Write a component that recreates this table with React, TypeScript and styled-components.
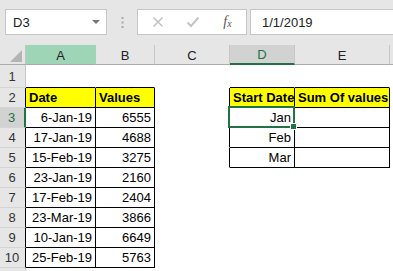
import React from 'react';
import styled, { createGlobalStyle } from 'styled-components';

const GREEN = '#217346';

const GlobalStyle = createGlobalStyle`
  html, body {
    margin: 0;
    padding: 0;
    background: #fff;
  }
  body {
    font-family: "Liberation Sans", Arial, sans-serif;
    width: 393px;
    height: 271px;
    overflow: hidden;
  }
`;

type Kind = 'plain' | 'head' | 'num';

interface ICell {
  text?: string;
  kind?: Kind;
}

// sheet content keyed by row, columns A..E as 1..5
const dates = ['6-Jan-19', '17-Jan-19', '15-Feb-19', '23-Jan-19', '17-Feb-19', '23-Mar-19', '10-Jan-19', '25-Feb-19'];
const values = ['6555', '4688', '3275', '2160', '2404', '3866', '6649', '5763'];
const months = ['Jan', 'Feb', 'Mar'];

const getCell = (r: number, c: number): ICell => {
  if (r === 2) {
    const heads: Record<number, string> = { 1: 'Date', 2: 'Values', 4: 'Start Date', 5: 'Sum Of values' };
    if (heads[c]) return { text: heads[c], kind: 'head' };
  }
  if (r >= 3 && r <= 10) {
    if (c === 1) return { text: dates[r - 3], kind: 'num' };
    if (c === 2) return { text: values[r - 3], kind: 'num' };
  }
  if (r >= 3 && r <= 5 && c === 4) return { text: months[r - 3], kind: 'num' };
  if (r >= 3 && r <= 5 && c === 5) return { kind: 'plain' };
  return {};
};

const bordered = (r: number, c: number) =>
  (r >= 2 && r <= 10 && c >= 1 && c <= 2) || (r >= 2 && r <= 5 && c >= 4 && c <= 5);

const Page = styled.div`
  width: 393px;
  height: 271px;
  overflow: hidden;
  background: #fff;
`;

const Toolbar = styled.div`
  height: 45px;
  box-sizing: border-box;
  background: #e6e6e6;
  display: flex;
  align-items: flex-start;
  padding: 9px 0 0 5px;
`;

const NameBox = styled.div`
  width: 102px;
  height: 26px;
  box-sizing: border-box;
  flex-shrink: 0;
  background: #fff;
  border: 1px solid #c6c6c6;
  display: flex;
  align-items: center;
  justify-content: space-between;
  padding: 0 6px 0 7px;
  font-size: 13px;
  color: #222;
`;

const DropArrow = styled.span`
  width: 0;
  height: 0;
  border-left: 4px solid transparent;
  border-right: 4px solid transparent;
  border-top: 4px solid #777;
`;

const Grip = styled.div`
  width: 30px;
  height: 26px;
  flex-shrink: 0;
  display: flex;
  align-items: center;
  justify-content: center;
`;

const FxBox = styled.div`
  width: 110px;
  height: 26px;
  box-sizing: border-box;
  flex-shrink: 0;
  background: #fff;
  border: 1px solid #c6c6c6;
  display: flex;
  align-items: center;
  padding-left: 2px;
`;

const FxSlot = styled.div`
  width: 35px;
  height: 100%;
  display: flex;
  align-items: center;
  justify-content: center;
`;

const FxLabel = styled.span`
  font-family: "Liberation Serif", "Times New Roman", serif;
  font-style: italic;
  font-size: 14px;
  color: #555;
  sub {
    font-size: 10px;
    vertical-align: -1px;
  }
`;

const FormulaInput = styled.div`
  flex: 1;
  height: 26px;
  box-sizing: border-box;
  margin-left: 3px;
  background: #fff;
  border: 1px solid #c6c6c6;
  border-right: none;
  display: flex;
  align-items: center;
  padding-left: 11px;
  font-size: 13px;
  color: #222;
`;

const Sheet = styled.div`
  display: grid;
  grid-template-columns: 26px 70px 59px 75px 65px 95px 1fr;
  grid-template-rows: 20px 23px repeat(10, 20px);
  font-size: 13px;
`;

const Corner = styled.div`
  box-sizing: border-box;
  background: #e6e6e6;
  border-right: 1px solid #c6c6c6;
  border-bottom: 1px solid #ababab;
  display: flex;
  align-items: flex-end;
  justify-content: flex-end;
  padding: 0 3px 2px 0;
`;

const ColHead = styled.div<{ $state: 'normal' | 'sel' | 'active' }>`
  box-sizing: border-box;
  display: flex;
  align-items: center;
  justify-content: center;
  padding-top: 1px;
  color: ${(p) => (p.$state === 'active' ? GREEN : '#222')};
  background: ${(p) => (p.$state === 'sel' ? '#9fd5b7' : p.$state === 'active' ? '#d2d2d2' : '#e6e6e6')};
  border-right: 1px solid ${(p) => (p.$state === 'sel' ? '#9fd5b7' : '#c6c6c6')};
  border-bottom: ${(p) => (p.$state === 'active' ? `2px solid ${GREEN}` : '1px solid #ababab')};
`;

const RowHead = styled.div<{ $edge: string; $active?: boolean }>`
  box-sizing: border-box;
  display: flex;
  align-items: center;
  justify-content: center;
  padding-right: 1px;
  color: ${(p) => (p.$active ? GREEN : '#333')};
  background: ${(p) => (p.$active ? '#d2d2d2' : '#e6e6e6')};
  border-bottom: 1px solid #d4d4d4;
  border-right: ${(p) => (p.$active ? `2px solid ${GREEN}` : `1px solid ${p.$edge}`)};
`;

const Cell = styled.div<{ $right: string; $bottom: string; $kind?: Kind }>`
  position: relative;
  box-sizing: border-box;
  display: flex;
  align-items: flex-end;
  justify-content: ${(p) => (p.$kind === 'num' ? 'flex-end' : 'flex-start')};
  padding: 0 3px 2px 3px;
  white-space: nowrap;
  color: #000;
  font-weight: ${(p) => (p.$kind === 'head' ? 700 : 400)};
  background: ${(p) => (p.$kind === 'head' ? '#ffff00' : '#fff')};
  border-right: 1px solid ${(p) => p.$right};
  border-bottom: 1px solid ${(p) => p.$bottom};
`;

const ActiveFrame = styled.div`
  position: absolute;
  top: -2px;
  left: -2px;
  right: -1px;
  bottom: -1px;
  border: 2px solid ${GREEN};
  z-index: 2;
  pointer-events: none;
`;

const FillHandle = styled.span`
  position: absolute;
  right: -4px;
  bottom: -4px;
  width: 5px;
  height: 5px;
  background: ${GREEN};
  border: 1px solid #fff;
`;

const columns = ['A', 'B', 'C', 'D', 'E', ''];

const App: React.FC = () => {
  const rows = Array.from({ length: 11 }, (_, i) => i + 1);
  return (
    <Page>
      <GlobalStyle />
      <Toolbar>
        <NameBox>
          <span>D3</span>
          <DropArrow />
        </NameBox>
        <Grip>
          <svg width="3" height="11" viewBox="0 0 3 11">
            <rect x="0.5" y="0" width="2" height="2" fill="#a8a8a8" />
            <rect x="0.5" y="4.5" width="2" height="2" fill="#a8a8a8" />
            <rect x="0.5" y="9" width="2" height="2" fill="#a8a8a8" />
          </svg>
        </Grip>
        <FxBox>
          <FxSlot>
            <svg width="12" height="12" viewBox="0 0 12 12">
              <path d="M1.5 1.5 L10.5 10.5 M10.5 1.5 L1.5 10.5" stroke="#bdbdbd" strokeWidth="1.4" fill="none" />
            </svg>
          </FxSlot>
          <FxSlot>
            <svg width="14" height="12" viewBox="0 0 14 12">
              <path d="M1.5 6.5 L5 10 L12.5 1.5" stroke="#c4c4c4" strokeWidth="2" fill="none" />
            </svg>
          </FxSlot>
          <FxSlot>
            <FxLabel>
              f<sub>x</sub>
            </FxLabel>
          </FxSlot>
        </FxBox>
        <FormulaInput>1/1/2019</FormulaInput>
      </Toolbar>

      <Sheet>
        <Corner>
          <svg width="12" height="12" viewBox="0 0 12 12">
            <polygon points="12,0 12,12 0,12" fill="#b4b4b4" />
          </svg>
        </Corner>
        {columns.map((col, i) => (
          <ColHead key={i} $state={col === 'A' ? 'sel' : col === 'D' ? 'active' : 'normal'}>
            {col}
          </ColHead>
        ))}

        {rows.map((r) => (
          <React.Fragment key={r}>
            <RowHead $edge={bordered(r, 1) ? '#000' : '#c6c6c6'} $active={r === 3}>
              {r <= 10 ? r : ''}
            </RowHead>
            {[1, 2, 3, 4, 5, 6].map((c) => {
              const cell = getCell(r, c);
              const right = bordered(r, c) || bordered(r, c + 1) ? '#000' : '#fff';
              const bottom = bordered(r, c) || bordered(r + 1, c) ? '#000' : '#fff';
              const isActive = r === 3 && c === 4;
              return (
                <Cell key={c} $right={right} $bottom={bottom} $kind={cell.kind}>
                  {cell.text}
                  {isActive && (
                    <ActiveFrame>
                      <FillHandle />
                    </ActiveFrame>
                  )}
                </Cell>
              );
            })}
          </React.Fragment>
        ))}
      </Sheet>
    </Page>
  );
};

export default App;
